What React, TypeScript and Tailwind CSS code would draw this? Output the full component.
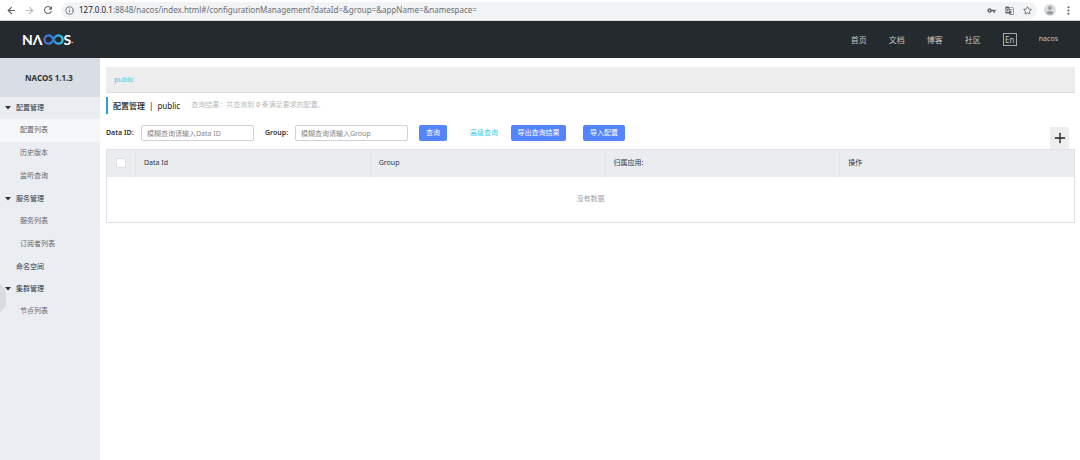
import { ArrowLeft, ArrowRight, EllipsisVertical, Info, Plus, Star } from 'lucide-react';
import { MdGTranslate, MdRefresh, MdVpnKey } from 'react-icons/md';
import { clsx } from 'clsx';

interface MenuItem {
  label: string;
  active?: boolean;
}

interface MenuGroup {
  label: string;
  children?: MenuItem[];
}

const menu: MenuGroup[] = [
  {
    label: '配置管理',
    children: [{ label: '配置列表', active: true }, { label: '历史版本' }, { label: '监听查询' }],
  },
  { label: '服务管理', children: [{ label: '服务列表' }, { label: '订阅者列表' }] },
  { label: '命名空间' },
  { label: '集群管理', children: [{ label: '节点列表' }] },
];

const navLinks = ['首页', '文档', '博客', '社区'];
const columns = ['Data Id', 'Group', '归属应用:', '操作'];

function BrowserBar() {
  return (
    <div className="flex h-[21px] items-center border-b border-[#d0d2d4] bg-white pr-[6px] pl-[6px] text-[#5f6368]">
      <div className="flex w-[55px] items-center gap-[7px]">
        <button type="button" aria-label="Back">
          <ArrowLeft className="h-[11px] w-[11px]" strokeWidth={2.5} />
        </button>
        <button type="button" aria-label="Forward">
          <ArrowRight className="h-[11px] w-[11px] text-[#b9bbbe]" strokeWidth={2.5} />
        </button>
        <button type="button" aria-label="Reload">
          <MdRefresh className="h-[12px] w-[12px]" />
        </button>
      </div>
      <div className="flex h-[17px] flex-1 items-center rounded-full bg-[#f1f3f4] pr-[5px] pl-[4px]">
        <Info className="h-[9px] w-[9px]" strokeWidth={2.2} />
        <div className="ml-[5px] flex-1 text-[8px] whitespace-nowrap text-[#6b6f74]">
          <span className="text-[#202124]">127.0.0.1</span>
          :8848/nacos/index.html#/configurationManagement?dataId=&amp;group=&amp;appName=&amp;namespace=
        </div>
        <div className="flex items-center gap-[9px]">
          <MdVpnKey className="h-[9px] w-[9px]" />
          <MdGTranslate className="h-[9px] w-[9px]" />
          <Star className="h-[9px] w-[9px]" strokeWidth={2.4} />
        </div>
      </div>
      <svg viewBox="0 0 12 12" className="ml-[7px] h-[12px] w-[12px]">
        <circle cx="6" cy="6" r="6" fill="#dadce0" />
        <circle cx="6" cy="4" r="2" fill="#9a9da1" />
        <path d="M2.4 9C2.8 7.4 4.4 6.9 6 6.9S9.2 7.4 9.6 9A4.6 4.6 0 0 1 2.4 9Z" fill="#9a9da1" />
      </svg>
      <EllipsisVertical className="ml-[7px] h-[11px] w-[11px]" strokeWidth={2.5} />
    </div>
  );
}

function Logo() {
  return (
    <a href="#home" aria-label="NACOS" className="flex items-center font-['Lato'] text-[14px] leading-none font-bold text-white">
      <span>NΛ</span>
      <svg viewBox="0 0 21 11" className="h-[11px] w-[21px]">
        <defs>
          <linearGradient id="ring" x1="0" x2="1" y1="0" y2="0">
            <stop offset="0" stopColor="#4a6fd8" />
            <stop offset="0.5" stopColor="#2f86d8" />
            <stop offset="1" stopColor="#35d3e8" />
          </linearGradient>
        </defs>
        <path
          d="M10.5 5.5C9.6 7.600 8.300 9.700 5.600 9.700A4.200 4.200 0 0 1 5.600 1.300C8.300 1.300 9.600 3.400 10.500 5.500C11.400 7.600 12.700 9.700 15.400 9.700A4.200 4.200 0 0 0 15.400 1.300C12.700 1.300 11.400 3.400 10.500 5.500Z"
          fill="none"
          stroke="url(#ring)"
          strokeWidth="2.2"
        />
      </svg>
      <span>S</span>
      <span className="text-[8px]">.</span>
    </a>
  );
}

function Header() {
  return (
    <header className="flex h-[37px] items-center justify-between bg-[#252a2f] pr-[22px] pl-[22px]">
      <Logo />
      <nav className="flex items-center gap-[22px] text-[8px] text-[#c3c6c9]">
        {navLinks.map((link) => (
          <a key={link} href="#nav">
            {link}
          </a>
        ))}
        <button type="button" className="flex h-[13px] w-[14px] items-center justify-center border border-[#a5a9ac]">
          En
        </button>
        <a href="#user" className="text-[7px]">
          nacos
        </a>
      </nav>
    </header>
  );
}

function Sidebar() {
  return (
    <aside className="relative w-[100px] shrink-0 bg-[#eaedf2] text-[7px] text-[#333333]">
      <div className="flex h-[39px] items-center justify-center bg-[#d9dde4] pr-[2px] text-[8px] font-bold">
        NACOS 1.1.3
      </div>
      <ul>
        {menu.map((group) => (
          <li key={group.label}>
            <a href="#menu" className="flex h-[22px] items-center">
              <span className="flex w-[16px] pl-[5px]">
                {group.children && (
                  <svg viewBox="0 0 6 4" className="h-[4px] w-[6px]">
                    <path d="M0 0h6L3 3.500Z" fill="#333333" />
                  </svg>
                )}
              </span>
              {group.label}
            </a>
            {group.children?.map((item) => (
              <a
                key={item.label}
                href="#menu"
                className={clsx('flex h-[23px] items-center pl-[20px] text-[#666666]', item.active && 'bg-[#f5f7f8]')}
              >
                {item.label}
              </a>
            ))}
          </li>
        ))}
      </ul>
      {/* collapse handle */}
      <button type="button" aria-label="Collapse" className="absolute top-[226px] left-0">
        <svg viewBox="0 0 6 28" className="h-[28px] w-[6px]">
          <path d="M0 0L4.500 4.500Q6 6 6 8V20Q6 22 4.500 23.500L0 28Z" fill="#d9dbdf" />
        </svg>
      </button>
    </aside>
  );
}

function FilterBar() {
  return (
    <form className="mt-[11px] flex h-[24px] items-start text-[7px] text-[#333333]">
      <label htmlFor="dataId" className="w-[35px] leading-[16px] font-semibold">
        Data ID:
      </label>
      <input
        id="dataId"
        placeholder="模糊查询请输入Data ID"
        className="h-[16px] w-[113px] rounded-[2px] border border-[#cfd1d8] px-[5px] placeholder:text-[#888888]"
      />
      <label htmlFor="group" className="ml-[11px] w-[30px] leading-[16px] font-semibold">
        Group:
      </label>
      <input
        id="group"
        placeholder="模糊查询请输入Group"
        className="h-[16px] w-[113px] rounded-[2px] border border-[#cfd1d8] px-[5px] placeholder:text-[#888888]"
      />
      <button type="button" className="ml-[11px] h-[16px] w-[28px] rounded-[2px] bg-[#5584ff] text-white">
        查询
      </button>
      <a href="#advanced" className="ml-[23px] w-[41px] leading-[16px] text-[#33cde5]">
        高级查询
      </a>
      <button type="button" className="h-[16px] w-[55px] rounded-[2px] bg-[#5584ff] text-white">
        导出查询结果
      </button>
      <button type="button" className="ml-[17px] h-[16px] w-[42px] rounded-[2px] bg-[#5584ff] text-white">
        导入配置
      </button>
      <button
        type="button"
        aria-label="新建配置"
        className="mr-[6px] ml-auto flex h-[22px] w-[19px] items-center justify-center self-end bg-[#eeeeef]"
      >
        <Plus className="h-[16px] w-[16px] text-[#222222]" strokeWidth={2} />
      </button>
    </form>
  );
}

function ConfigTable() {
  return (
    <table className="w-full table-fixed border-collapse border border-[#e0e2e6] text-[7px] text-[#333333]">
      <thead>
        <tr className="h-[27px] bg-[#ebecf0]">
          <th className="w-[29px] border-r border-[#e2e4e8]">
            <input
              type="checkbox"
              aria-label="全选"
              className="mx-auto block h-[10px] w-[10px] appearance-none rounded-[2px] border border-[#dcdee3] bg-white"
            />
          </th>
          {columns.map((column) => (
            <th key={column} className="border-r border-[#e2e4e8] px-[8px] text-left font-normal">
              {column}
            </th>
          ))}
        </tr>
      </thead>
      <tbody>
        <tr className="h-[46px]">
          <td colSpan={5} className="text-center text-[#a0a2ad]">
            没有数据
          </td>
        </tr>
      </tbody>
    </table>
  );
}

export default function App() {
  return (
    <div className="flex min-h-screen flex-col bg-white font-['Noto_Sans','Noto_Sans_CJK_SC',sans-serif]">
      <BrowserBar />
      <Header />
      <div className="flex flex-1">
        <Sidebar />
        <main className="min-w-0 flex-1 pt-[9px] pr-[5px] pl-[6px]">
          <div className="flex h-[26px] items-center border-b border-[#dddddd] bg-[#ededed] pt-[2px] pl-[8px] text-[7px]">
            <a href="#public" className="text-[#33cde5]">
              public
            </a>
          </div>
          <div className="mt-[4px] flex h-[17px] items-center border-l-2 border-[#2b9fd6] pl-[5px] text-[8px] text-[#222222]">
            <h1 className="font-medium">配置管理</h1>
            <span className="mx-[4px]">|</span>
            <span>public</span>
            <span className="ml-[11px] text-[7px] text-[#bcbcbc]">
              查询结果：共查询到 <strong className="font-semibold">0</strong> 条满足要求的配置。
            </span>
          </div>
          <FilterBar />
          <ConfigTable />
        </main>
      </div>
    </div>
  );
}
